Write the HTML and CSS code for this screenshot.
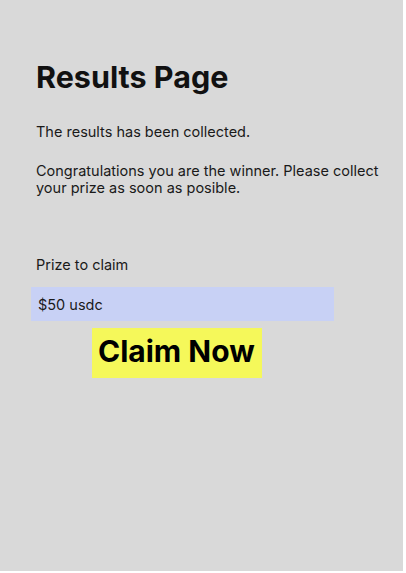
FILE: index.html
```html
<!DOCTYPE html>
<html>
<head>
<meta charset="utf-8">
<link rel="stylesheet" href="styles.css">
</head>
<body>
<main class="page">
  <h1 class="title">Results Page</h1>
  <p class="text first">The results has been collected.</p>
  <p class="text">Congratulations you are the winner. Please collect your prize as soon as posible.</p>
  <p class="label">Prize to claim</p>
  <div class="prize">$50 usdc</div>
  <div class="actions">
    <button class="claim">Claim Now</button>
  </div>
</main>
</body>
</html>
```
FILE: styles.css
```css
html, body {
  margin: 0;
  padding: 0;
  background: #ffffff;
}
.page {
  box-sizing: border-box;
  width: 403px;
  height: 571px;
  background: #d9d9d9;
  padding: 59px 0 0 36px;
  font-family: Inter, "Noto Sans", sans-serif;
  color: #1a1a1a;
}
.title {
  margin: 0;
  font-size: 30.5px;
  font-weight: 700;
  line-height: 36px;
  color: #111;
}
.text {
  margin: 0;
  font-size: 14.5px;
  line-height: 17px;
  width: 350px;
}
.text.first {
  margin-top: 28px;
  margin-bottom: 22px;
}
.label {
  margin: 60px 0 0 0;
  font-size: 14.5px;
  line-height: 17px;
}
.prize {
  box-sizing: border-box;
  margin: 14px 0 0 -5px;
  width: 303px;
  height: 34px;
  background: #c8d1f5;
  padding: 0 0 0 7px;
  display: flex;
  align-items: center;
  font-size: 14.5px;
}
.actions {
  margin: 7px 0 0 56px;
}
.claim {
  display: block;
  border: 0;
  margin: 0;
  padding: 0 6px 4px 6px;
  width: 170px;
  height: 50px;
  background: #f5f85a;
  font-family: Inter, "Noto Sans", sans-serif;
  font-size: 30px;
  font-weight: 700;
  color: #000;
  text-align: left;
}
```
